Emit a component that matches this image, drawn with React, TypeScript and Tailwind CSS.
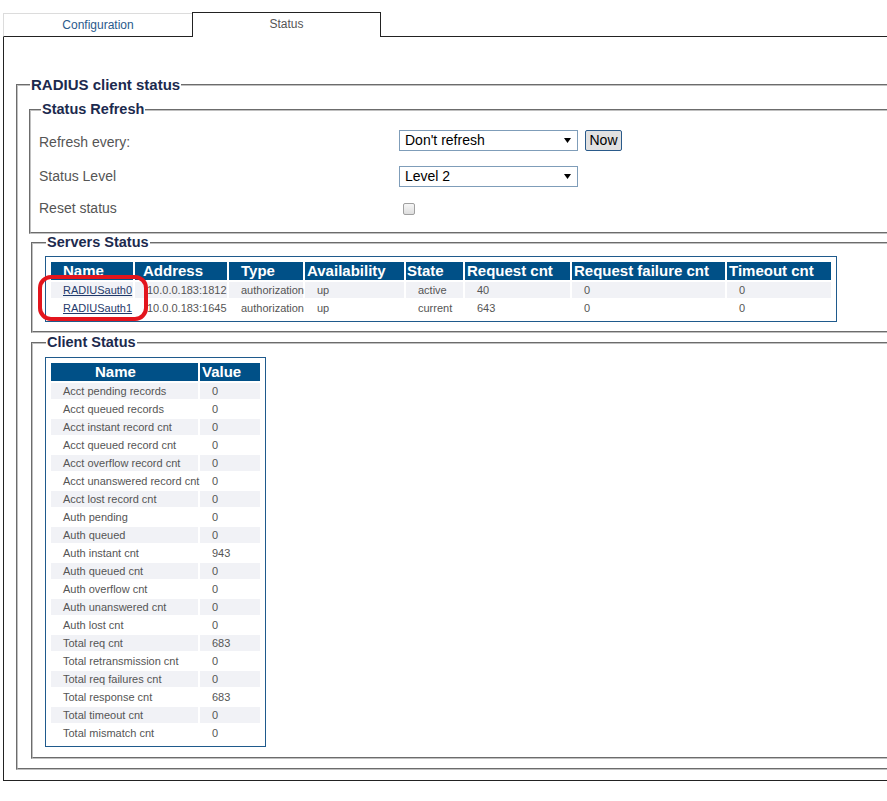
import React from "react";

const servers = [
  { name: "RADIUSauth0", addr: "10.0.0.183:1812", type: "authorization", avail: "up", state: "active", req: "40", fail: "0", timeout: "0" },
  { name: "RADIUSauth1", addr: "10.0.0.183:1645", type: "authorization", avail: "up", state: "current", req: "643", fail: "0", timeout: "0" },
];

const clientRows: [string, string][] = [
  ["Acct pending records", "0"],
  ["Acct queued records", "0"],
  ["Acct instant record cnt", "0"],
  ["Acct queued record cnt", "0"],
  ["Acct overflow record cnt", "0"],
  ["Acct unanswered record cnt", "0"],
  ["Acct lost record cnt", "0"],
  ["Auth pending", "0"],
  ["Auth queued", "0"],
  ["Auth instant cnt", "943"],
  ["Auth queued cnt", "0"],
  ["Auth overflow cnt", "0"],
  ["Auth unanswered cnt", "0"],
  ["Auth lost cnt", "0"],
  ["Total req cnt", "683"],
  ["Total retransmission cnt", "0"],
  ["Total req failures cnt", "0"],
  ["Total response cnt", "683"],
  ["Total timeout cnt", "0"],
  ["Total mismatch cnt", "0"],
];

const fs = "min-w-0 border-2 border-[#c0c0c0] [border-style:groove]";
const th = "bg-[#005087] text-white font-bold text-[15px] leading-[18px] h-[18px] text-left p-0 whitespace-nowrap overflow-hidden";
const td = "text-[11px] leading-[16px] h-[16px] text-[#555] text-left p-0 pl-[12px] whitespace-nowrap";

function Arrow() {
  return (
    <svg width="7" height="5" viewBox="0 0 7 5" className="shrink-0">
      <polygon points="0,0 7,0 3.5,5" fill="#000" />
    </svg>
  );
}

export default function App() {
  return (
    <div className="relative w-[887px] h-[801px] overflow-hidden bg-white font-['Liberation_Sans',Arial,Helvetica,sans-serif]">
      <div className="w-[1000px] pl-[3px] pt-[12px]">
        {/* Tabs */}
        <div className="flex items-end h-[25px]">
          <div className="w-[189px] h-[24px] border-t border-l border-b border-t-[#dcdcdc] border-l-[#dcdcdc] border-b-[#222] bg-white text-center text-[12px] leading-[14px] pt-[4px] text-[#2a5a8c]">
            Configuration
          </div>
          <div className="w-[189px] h-[25px] border-t border-l border-r border-[#222] bg-white text-center text-[12px] leading-[14px] pt-[4px] text-[#555]">
            Status
          </div>
          <div className="flex-1 h-[25px] border-b border-[#222]" />
        </div>

        {/* Panel */}
        <div className="border-l border-b border-[#222] pt-[39px] pb-[10px]">
          <fieldset className={`${fs} mx-[12px]`}>
            <legend className="ml-[12px] px-px text-[15px] leading-[17px] font-bold text-[#1c2a4e]">RADIUS client status</legend>
            <div className="pt-[8px] pb-[9px]">
              {/* Status Refresh */}
              <fieldset className={`${fs} ml-[11px] mr-[10px]`}>
                <legend className="ml-[10px] px-px text-[14.5px] leading-[17px] font-bold text-[#1c2a4e]">Status Refresh</legend>
                <div className="pl-[8px] pt-[12px] pb-[16px] flex flex-col">
                  <div className="flex h-[21px]">
                    <div className="w-[360px] mt-[4px] text-[14px] leading-[16px] text-[#555]">Refresh every:</div>
                    <div className="w-[179px] h-[21px] border border-[#7f9db9] bg-white flex items-center justify-between pl-[5px] pr-[6px] text-[14px] leading-[19px] text-black">
                      <span>Don't refresh</span>
                      <Arrow />
                    </div>
                    <div className="ml-[7px] w-[37px] h-[21px] border border-[#2a5a8a] rounded-[2px] bg-[#e1e1e1] text-center text-[14px] leading-[19px] text-black">
                      Now
                    </div>
                  </div>
                  <div className="flex h-[21px] mt-[15px]">
                    <div className="w-[360px] mt-[2px] text-[14px] leading-[16px] text-[#555]">Status Level</div>
                    <div className="w-[179px] h-[21px] border border-[#7f9db9] bg-white flex items-center justify-between pl-[5px] pr-[6px] text-[14px] leading-[19px] text-black">
                      <span>Level 2</span>
                      <Arrow />
                    </div>
                  </div>
                  <div className="flex h-[16px] mt-[13px]">
                    <div className="w-[360px] text-[14px] leading-[16px] text-[#555]">Reset status</div>
                    <div className="ml-[4px] mt-[3px] w-[12px] h-[12px] border border-[#a0a0a0] rounded-[2px] bg-linear-to-b from-[#f6f6f6] to-[#dedede]" />
                  </div>
                </div>
              </fieldset>

              {/* Servers Status */}
              <fieldset className={`${fs} ml-[13px] mr-[10px]`}>
                <legend className="ml-[13px] px-px text-[14.5px] leading-[17px] font-bold text-[#1c2a4e]">Servers Status</legend>
                <div className="pl-[12px] pt-[5px] pb-[9px]">
                  <div className="w-fit border border-[#1f5a8c] p-[3px]">
                    <table className="table-fixed border-separate border-spacing-[2px] w-[784px]">
                      <thead>
                        <tr>
                          <th className={`${th} w-[82px] pl-[12px]`}>Name</th>
                          <th className={`${th} w-[92px] pl-[8px]`}>Address</th>
                          <th className={`${th} w-[74px] pl-[12px]`}>Type</th>
                          <th className={`${th} w-[99px] pl-[2px]`}>Availability</th>
                          <th className={`${th} w-[57px] pl-[1px]`}>State</th>
                          <th className={`${th} w-[105px] pl-[2px]`}>Request cnt</th>
                          <th className={`${th} w-[153px] pl-[2px]`}>Request failure cnt</th>
                          <th className={`${th} w-[104px] pl-[2px]`}>Timeout cnt</th>
                        </tr>
                      </thead>
                      <tbody>
                        {servers.map((s, i) => {
                          const bg = i % 2 === 0 ? " bg-[#f1f2f6]" : "";
                          return (
                            <tr key={s.name}>
                              <td className={td + bg}>
                                <a href="#" className="text-[#1f3a6b] underline">{s.name}</a>
                              </td>
                              <td className={td + bg}>{s.addr}</td>
                              <td className={td + bg}>{s.type}</td>
                              <td className={td + bg}>{s.avail}</td>
                              <td className={td + bg}>{s.state}</td>
                              <td className={td + bg}>{s.req}</td>
                              <td className={td + bg}>{s.fail}</td>
                              <td className={td + bg}>{s.timeout}</td>
                            </tr>
                          );
                        })}
                      </tbody>
                    </table>
                  </div>
                </div>
              </fieldset>

              {/* Client Status */}
              <fieldset className={`${fs} ml-[13px] mr-[10px] mt-[1px]`}>
                <legend className="ml-[13px] px-px text-[14.5px] leading-[17px] font-bold text-[#1c2a4e]">Client Status</legend>
                <div className="pl-[12px] pt-[6px] pb-[10px]">
                  <div className="w-fit border border-[#1f5a8c] p-[3px]">
                    <table className="table-fixed border-separate border-spacing-[2px] w-[213px]">
                      <thead>
                        <tr>
                          <th className={`${th} w-[147px] pl-[44px]`}>Name</th>
                          <th className={`${th} w-[60px] pl-[2px]`}>Value</th>
                        </tr>
                      </thead>
                      <tbody>
                        {clientRows.map(([n, v], i) => {
                          const bg = i % 2 === 0 ? " bg-[#f1f2f6]" : "";
                          return (
                            <tr key={n}>
                              <td className={td + bg}>{n}</td>
                              <td className={td + bg}>{v}</td>
                            </tr>
                          );
                        })}
                      </tbody>
                    </table>
                  </div>
                </div>
              </fieldset>
            </div>
          </fieldset>
        </div>
      </div>

      {/* Red annotation */}
      <div className="absolute left-[38px] top-[275px] w-[110px] h-[46px] border-[4px] border-[#e3151d] rounded-[13px] pointer-events-none" />
    </div>
  );
}
